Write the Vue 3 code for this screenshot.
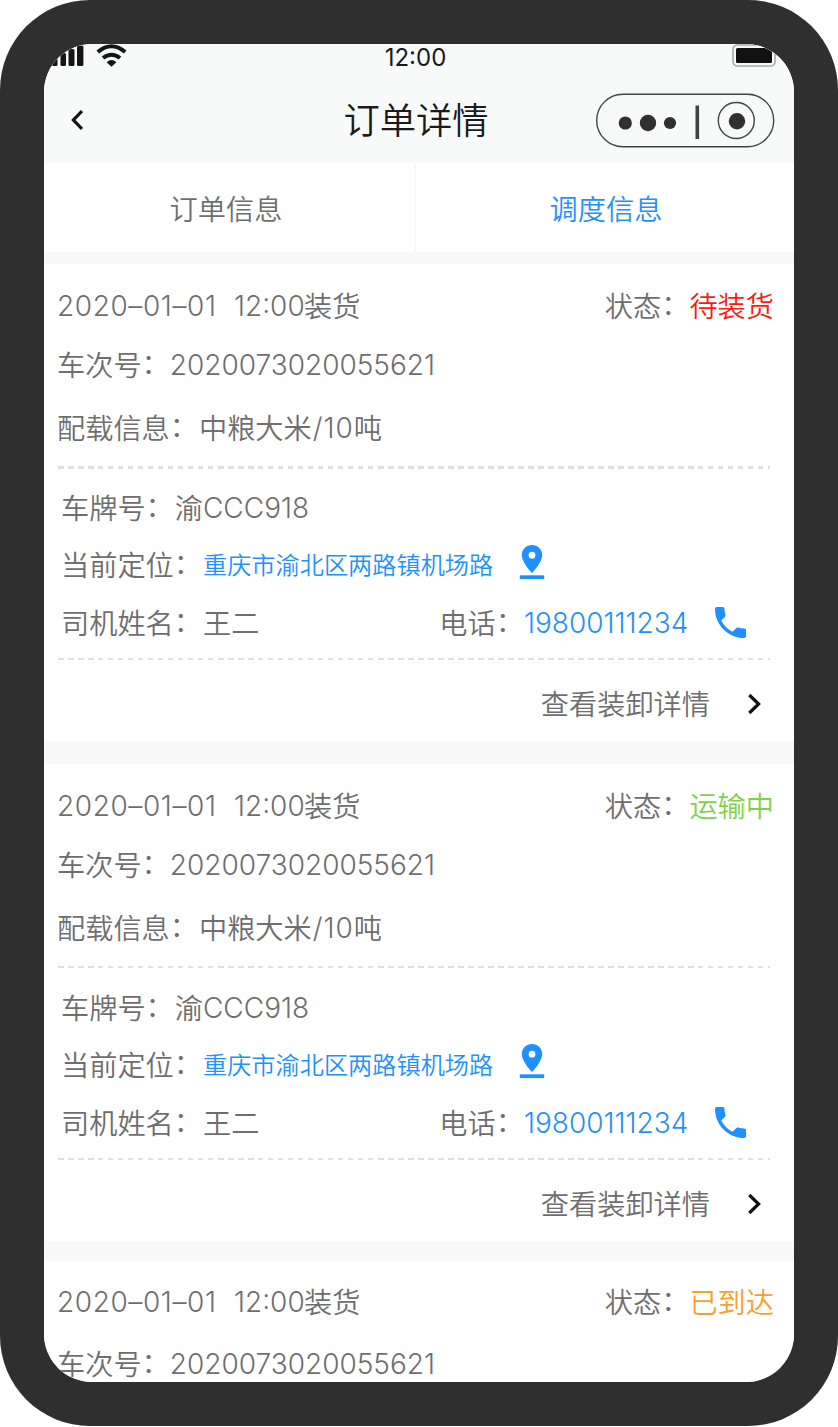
<template>
  <div class="phone">
    <div class="screen">
      <header class="header">
        <div class="status-bar">
          <div class="signal">
            <svg class="bars" width="36" height="22" viewBox="0 0 36 22">
              <rect x="4" y="12" width="5.5" height="9" rx="1.5" />
              <rect x="12.5" y="8" width="5.5" height="13" rx="1.5" />
              <rect x="20.5" y="4" width="6" height="17" rx="1.5" />
              <rect x="29" y="0.5" width="6.4" height="20.5" rx="1.5" />
            </svg>
            <svg class="wifi" width="32" height="23" viewBox="0 0 32 23">
              <path d="M1.8 8 Q15.5 -3.6 29.2 8" stroke-width="4" />
              <path d="M7 14 Q15.5 7.4 24 14" stroke-width="4" />
              <path class="fill" d="M10.6 18.2 Q15.5 14 20.4 18.2 L15.5 22.8Z" />
            </svg>
          </div>
          <span class="clock">12:00</span>
          <svg class="battery" width="45" height="23" viewBox="0 0 45 23">
            <rect x="1" y="1" width="42" height="21" rx="4.5" fill="#f8f9f9" stroke="#aaa" stroke-width="1.6" />
            <rect x="4" y="4" width="36" height="15" rx="1.5" fill="#111" />
          </svg>
        </div>
        <div class="nav-bar">
          <svg class="back" width="14" height="22" viewBox="0 0 14 22">
            <path d="M13 2 L4.4 11 L13 20" />
          </svg>
          <h1 class="title">订单详情</h1>
          <svg class="capsule" width="180" height="56" viewBox="0 0 180 56">
            <rect x="1.7" y="2.2" width="177" height="52.5" rx="26.2" />
            <circle class="dot" cx="30.3" cy="31" r="6.6" />
            <circle class="dot" cx="53" cy="31" r="8.2" />
            <circle class="dot" cx="75" cy="31" r="6.1" />
            <path d="M102.3 13.5 V47" stroke-width="3.6" />
            <circle cx="141.3" cy="28.5" r="18" />
            <circle class="dot" cx="142" cy="29.3" r="8.2" />
          </svg>
        </div>
      </header>

      <nav class="tabs">
        <div
          v-for="tab in tabs"
          :key="tab.id"
          class="tab"
          :class="{ active: tab.id === activeTab }"
          @click="activeTab = tab.id"
        >
          {{ tab.label }}
        </div>
      </nav>

      <section v-for="order in orders" :key="order.id" class="card" :class="order.status">
        <div class="row row-time">
          <span class="num date">{{ order.date }}</span>
          <span class="num time">{{ order.time }}</span>
          <span class="zh">装货</span>
          <span class="zh status-label">状态<i>：</i></span>
          <span class="zh status-value">{{ order.statusText }}</span>
        </div>
        <div class="row row-trip">
          <span class="zh">车次号<i>：</i></span>
          <span class="num">{{ order.tripNo }}</span>
        </div>
        <template v-if="order.cargo">
          <div class="row row-cargo">
            <span class="zh">配载信息<i>：</i></span>
            <span class="zh value">{{ order.cargo }}</span>
            <span class="num weight">/{{ order.tons }}</span>
            <span class="zh">吨</span>
          </div>
          <div class="divider thick"></div>
          <div class="vehicle">
            <div class="row row-plate">
              <span class="zh">车牌号<i>：</i></span>
              <span class="zh value">渝</span>
              <span class="num plate">{{ order.plate }}</span>
            </div>
            <div class="row">
              <span class="zh">当前定位<i>：</i></span>
              <span class="zh value address">{{ order.address }}</span>
              <svg class="pin" width="26" height="36" viewBox="0 0 26 36">
                <path d="M13 1 C7 1 2.8 5.4 2.8 11.2 C2.8 18.5 13 29 13 29 S23.2 18.5 23.2 11.2 C23.2 5.4 19 1 13 1Z M13 7.8 a3.4 3.4 0 1 1 0 6.8 a3.4 3.4 0 1 1 0 -6.8Z" fill-rule="evenodd" />
                <rect x="0.8" y="31.3" width="24.4" height="3.8" />
              </svg>
            </div>
            <div class="row">
              <span class="zh">司机姓名<i>：</i></span>
              <span class="zh value">{{ order.driver }}</span>
              <span class="zh phone-label">电话<i>：</i></span>
              <span class="num tel">{{ order.tel }}</span>
              <svg class="call" width="31" height="31" viewBox="3 3 18 18">
                <path d="M6.62 10.79c1.44 2.83 3.76 5.14 6.59 6.59l2.2-2.2c.27-.27.67-.36 1.02-.24 1.12.37 2.33.57 3.57.57.55 0 1 .45 1 1V20c0 .55-.45 1-1 1-9.39 0-17-7.61-17-17 0-.55.45-1 1-1h3.5c.55 0 1 .45 1 1 0 1.25.2 2.45.57 3.57.11.35.03.74-.25 1.02l-2.2 2.2z" />
              </svg>
            </div>
          </div>
          <div class="divider"></div>
          <div class="footer">
            <span class="zh">查看装卸详情</span>
            <svg class="arrow" width="15" height="22" viewBox="0 0 15 22">
              <path d="M2.3 2 L11.6 11 L2.3 20" />
            </svg>
          </div>
        </template>
      </section>
    </div>
  </div>
</template>

<script setup>
import { ref } from 'vue'

const activeTab = ref('dispatch')

const tabs = [
  { id: 'order', label: '订单信息' },
  { id: 'dispatch', label: '调度信息' },
]

const base = {
  date: '2020–01–01',
  time: '12:00',
  tripNo: '2020073020055621',
}

const detail = {
  cargo: '中粮大米',
  tons: 10,
  plate: 'CCC918',
  address: '重庆市渝北区两路镇机场路',
  driver: '王二',
  tel: '19800111234',
}

const orders = [
  { ...base, ...detail, id: 1, status: 'waiting', statusText: '待装货' },
  { ...base, ...detail, id: 2, status: 'moving', statusText: '运输中' },
  { ...base, id: 3, status: 'arrived', statusText: '已到达' },
]
</script>

<style>
body {
  background: #fff;
}
</style>

<style scoped>
.phone {
  box-sizing: border-box;
  width: 838px;
  height: 1426px;
  padding: 44px;
  border-radius: 90px;
  background: #2f2f2f;
  font-family: "Noto Sans CJK SC", sans-serif;
  font-size: 28.2px;
  font-weight: 350;
  color: #6e6e6e;
}
.screen {
  height: 1338px;
  border-radius: 48px;
  overflow: hidden;
  background: #f9f9f9;
}
.screen svg { flex: none; }
.header {
  height: 119px;
  background: #f8f9f9;
  color: #1a1a1a;
}
.status-bar {
  display: grid;
  grid-template-columns: 1fr auto 1fr;
  height: 28px;
  padding: 0 17px 0 4px;
}
.signal { display: flex; gap: 12px; }
.bars { fill: #151515; margin-top: 1px; }
.wifi { fill: none; stroke: #151515; }
.wifi .fill { fill: #151515; stroke: none; }
.clock {
  padding-left: 6px;
  font-family: Inter, sans-serif;
  font-size: 24px;
  font-weight: 400;
  line-height: 27px;
}
.battery { justify-self: end; }
.nav-bar {
  display: grid;
  grid-template-columns: 1fr auto 1fr;
  align-items: center;
  height: 96px;
  padding: 0 19px 0 25px;
}
.back, .arrow { fill: none; stroke: #111; stroke-width: 3.2; }
.title {
  margin: 0;
  padding: 0 12px 5px 0;
  font-size: 36.3px;
  font-weight: 350;
}
.capsule {
  justify-self: end;
  fill: none;
  stroke: #444;
  stroke-width: 1.4;
}
.capsule .dot { fill: #303030; stroke: none; }
.tabs {
  display: flex;
  height: 89px;
  margin-bottom: 12px;
  background: #fff;
}
.tab {
  box-sizing: border-box;
  width: 372px;
  padding-right: 7px;
  border-right: 1px solid #f6f6f6;
  line-height: 89px;
  text-align: center;
}
.tab:last-child { width: 378px; padding: 0 0 0 2px; border: 0; }
.tab.active { color: #1e90ff; }
.card {
  box-sizing: border-box;
  height: 477px;
  margin-bottom: 23px;
  padding: 12px 24px 0 14px;
  background: #fff;
}
.card.moving { margin-bottom: 20px; }
.row {
  display: flex;
  align-items: center;
  height: 58px;
  margin-left: -1px;
  white-space: nowrap;
}
.row-time { height: 60px; margin-right: -4px; }
.row-cargo { height: 68px; }
/* the CJK face sits lower in its line box than the latin one */
.zh { padding-bottom: 4px; }
.zh i {
  position: relative;
  top: -2px;
  font-style: normal;
}
.value { margin-left: 1px; }
.num {
  font-family: Inter, "Noto Sans CJK SC", sans-serif;
  font-size: 28px;
  font-weight: 350;
}
.date { width: 177px; letter-spacing: 0.6px; }
.time { width: 70px; }
.weight { margin-left: 1px; letter-spacing: 1px; }
.status-label { margin-left: auto; }
.waiting .status-value { color: #ff1a10; }
.moving .status-value { color: #7ed348; }
.arrived .status-value { color: #ff9d28; }
.arrived .row-time { height: 58px; }
.arrived .row-trip { height: 66px; }
.divider {
  height: 2px;
  background: repeating-linear-gradient(90deg, #e0e0e0 0 5.5px, transparent 5.5px 10px);
}
.divider.thick { height: 3px; margin-top: 4px; }
.moving .divider.thick { height: 2px; margin-bottom: 1px; }
.vehicle { padding: 11px 0 6px 4px; }
.row-plate { height: 56px; }
.address { font-size: 24.2px; color: #1e90ff; }
.pin { margin: -6px 0 0 26px; fill: #1e90ff; }
.moving .pin { margin-top: -8px; }
.phone-label { margin-left: 180px; }
.tel { width: 191px; color: #1e90ff; }
.call { margin-top: -2px; fill: #1e90ff; }
.footer {
  display: flex;
  align-items: center;
  justify-content: flex-end;
  gap: 37px;
  height: 79px;
  padding: 9px 8px 0 0;
  box-sizing: border-box;
}
</style>
